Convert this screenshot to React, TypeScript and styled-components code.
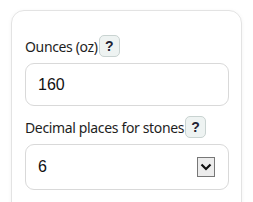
import React from "react";
import styled, { createGlobalStyle } from "styled-components";

const Global = createGlobalStyle`
  html, body { margin: 0; padding: 0; background: #ffffff; }
  body { font-family: "Noto Sans", "Open Sans", sans-serif; }
  #root { height: 202px; overflow: hidden; }
`;

const Card = styled.div`
  margin: 10px 0 0 11px;
  width: 231px;
  height: 220px;
  box-sizing: border-box;
  border: 1px solid #e3e3e3;
  border-radius: 13px;
  box-shadow: 0 1px 4px rgba(0, 0, 0, 0.05);
  padding: 24px 13px 0 13px;
  display: flex;
  flex-direction: column;
`;

const Field = styled.div<{ $gap?: number }>`
  display: flex;
  flex-direction: column;
  margin-top: ${(p) => p.$gap ?? 0}px;
`;

const LabelRow = styled.div`
  display: flex;
  align-items: center;
  height: 22px;
  margin-bottom: 6px;
`;

const Label = styled.span`
  font-family: "Noto Sans", sans-serif;
  font-size: 14px;
  color: #1e1e1e;
  letter-spacing: -0.35px;
`;

const Help = styled.span`
  box-sizing: border-box;
  display: inline-flex;
  align-items: center;
  justify-content: center;
  width: 21px;
  height: 22px;
  margin-left: 1px;
  background: #eef3f2;
  border: 1px solid #c9d3d1;
  border-radius: 5px;
  font-family: "Liberation Sans", Arial, sans-serif;
  font-weight: 700;
  font-size: 14px;
  color: #223;
`;

const Box = styled.div<{ $h: number }>`
  box-sizing: border-box;
  height: ${(p) => p.$h}px;
  width: 204px;
  border: 1px solid #d9d9d9;
  border-radius: 9px;
  display: flex;
  align-items: center;
  padding: 0 13px 0 12px;
  font-family: "Liberation Sans", Arial, sans-serif;
  font-size: 16px;
  color: #111;
`;

const Value = styled.span`
  flex: 1;
`;

const Arrow = styled.span`
  box-sizing: border-box;
  width: 18px;
  height: 20px;
  border: 1px solid #777;
  background: #ececec;
  display: flex;
  align-items: center;
  justify-content: center;
`;

export default function App() {
  return (
    <>
      <Global />
      <Card>
        <Field>
          <LabelRow>
            <Label>Ounces (oz)</Label>
            <Help>?</Help>
          </LabelRow>
          <Box $h={43}>
            <Value>160</Value>
          </Box>
        </Field>
        <Field $gap={10}>
          <LabelRow>
            <Label>Decimal places for stones</Label>
            <Help>?</Help>
          </LabelRow>
          <Box $h={46}>
            <Value>6</Value>
            <Arrow>
              <svg width="12" height="8" viewBox="0 0 12 8">
                <path d="M1.5 1.5 L6 6 L10.5 1.5" fill="none" stroke="#111" strokeWidth="2.2" />
              </svg>
            </Arrow>
          </Box>
        </Field>
      </Card>
    </>
  );
}
